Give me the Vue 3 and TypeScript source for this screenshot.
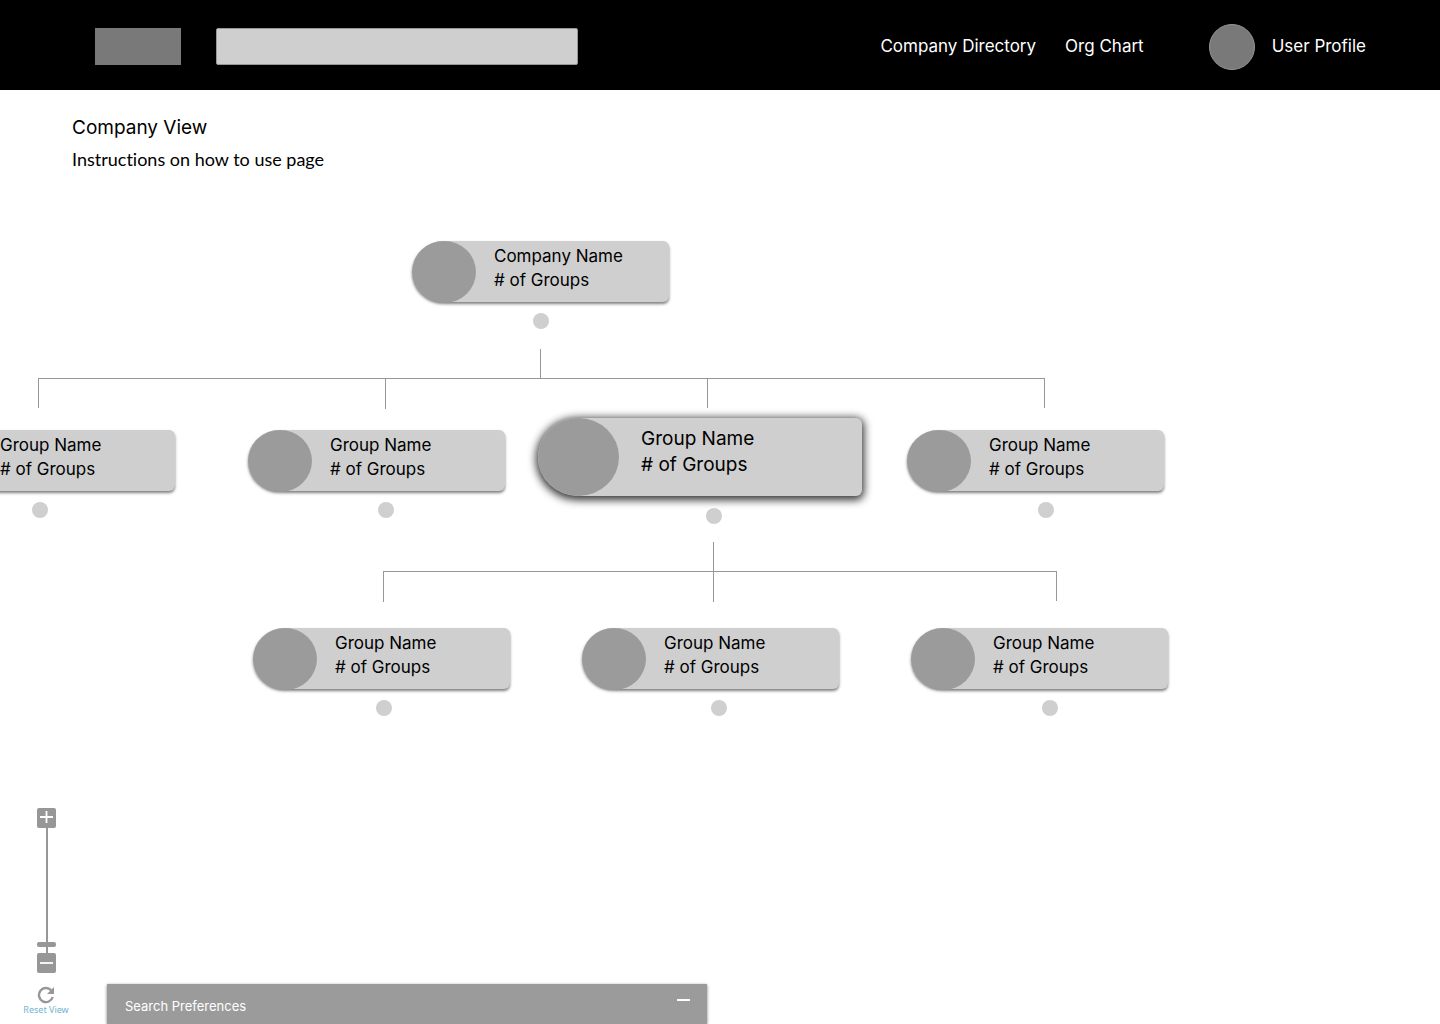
<script setup lang="ts">
import { ref } from 'vue'

interface OrgNode {
  id: number
  name: string
  x: number
  y: number
  dotX: number
  dotY: number
  selected?: boolean
}

interface Segment {
  x: number
  y: number
  w: number
  h: number
}

const nodes: OrgNode[] = [
  { id: 1, name: 'Company Name', x: 412, y: 61, dotX: 533, dotY: 133 },
  { id: 2, name: 'Group Name', x: -82, y: 250, dotX: 32, dotY: 322 },
  { id: 3, name: 'Group Name', x: 248, y: 250, dotX: 378, dotY: 322 },
  { id: 4, name: 'Group Name', x: 538, y: 238, dotX: 706, dotY: 328, selected: true },
  { id: 5, name: 'Group Name', x: 907, y: 250, dotX: 1038, dotY: 322 },
  { id: 6, name: 'Group Name', x: 253, y: 448, dotX: 376, dotY: 520 },
  { id: 7, name: 'Group Name', x: 582, y: 448, dotX: 711, dotY: 520 },
  { id: 8, name: 'Group Name', x: 911, y: 448, dotX: 1042, dotY: 520 },
]

const segments: Segment[] = [
  { x: 540, y: 169, w: 1, h: 30 },
  { x: 38, y: 198, w: 1007, h: 1 },
  { x: 38, y: 198, w: 1, h: 30 },
  { x: 385, y: 198, w: 1, h: 31 },
  { x: 707, y: 198, w: 1, h: 30 },
  { x: 1044, y: 198, w: 1, h: 30 },
  { x: 713, y: 362, w: 1, h: 60 },
  { x: 383, y: 391, w: 674, h: 1 },
  { x: 383, y: 391, w: 1, h: 31 },
  { x: 1056, y: 391, w: 1, h: 30 },
]

const query = ref('')
const zoom = ref(5)

function step(amount: number) {
  zoom.value = Math.min(100, Math.max(0, Number(zoom.value) + amount))
}
</script>

<template>
  <div class="page">
    <header class="topbar">
      <a class="logo" href="#" aria-label="Home"></a>
      <input v-model="query" class="search" type="search" aria-label="Search" />
      <nav class="nav">
        <a href="#directory">Company Directory</a>
        <a href="#chart">Org Chart</a>
      </nav>
      <a class="profile" href="#profile">
        <span class="avatar"></span>
        <span class="user">User Profile</span>
      </a>
    </header>

    <section class="intro">
      <h1>Company View</h1>
      <p>Instructions on how to use page</p>
    </section>

    <main class="canvas">
      <svg class="links" aria-hidden="true">
        <rect v-for="(s, i) in segments" :key="i" :x="s.x" :y="s.y" :width="s.w" :height="s.h" />
      </svg>

      <template v-for="n in nodes" :key="n.id">
        <article
          class="node"
          :class="{ selected: n.selected }"
          :style="{ left: n.x + 'px', top: n.y + 'px' }"
        >
          <span class="portrait"></span>
          <div class="label">
            <h2>{{ n.name }}</h2>
            <p># of Groups</p>
          </div>
        </article>
        <button
          class="dot"
          type="button"
          :aria-label="'Expand ' + n.name"
          :style="{ left: n.dotX + 'px', top: n.dotY + 'px' }"
        ></button>
      </template>

      <div class="zoom">
        <button class="square" type="button" aria-label="Zoom in" @click="step(5)">
          <svg width="19" height="20" viewBox="0 0 19 20">
            <path d="M3 9h13M9.5 3v12" stroke="#fff" stroke-width="1.8" />
          </svg>
        </button>
        <input v-model="zoom" class="slider" type="range" min="0" max="100" aria-label="Zoom level" />
        <button class="square" type="button" aria-label="Zoom out" @click="step(-5)">
          <svg width="19" height="20" viewBox="0 0 19 20">
            <path d="M3 10h13" stroke="#fff" stroke-width="1.8" />
          </svg>
        </button>
        <button class="reset" type="button" @click="zoom = 5">
          <svg width="18" height="18" viewBox="0 0 18 18">
            <path d="M14.2 4.4A7 7 0 1 0 15.7 11" fill="none" stroke="#979797" stroke-width="2.4" />
            <path d="M17 1v7h-7z" fill="#979797" />
          </svg>
          <span>Reset View</span>
        </button>
      </div>

      <section class="prefs">
        <h2>Search Preferences</h2>
        <button class="collapse" type="button" aria-label="Minimize"></button>
      </section>
    </main>
  </div>
</template>

<style>
body {
  margin: 0;
  background: #fff;
}
</style>

<style scoped>
.page {
  display: flex;
  flex-direction: column;
  min-height: 100vh;
  font-family: Inter, 'Liberation Sans', sans-serif;
  color: #000;
}

h1,
h2,
p {
  margin: 0;
  font-weight: 400;
}

a {
  color: inherit;
  text-decoration: none;
}

button {
  padding: 0;
  border: 0;
  cursor: pointer;
}

.topbar {
  display: flex;
  align-items: center;
  box-sizing: border-box;
  height: 90px;
  padding: 3px 74px 0 95px;
  background: #000;
  color: #fff;
  font-size: 17px;
  line-height: 24px;
}

.logo {
  width: 86px;
  height: 37px;
  margin-right: 35px;
  background: #797979;
}

.search {
  box-sizing: border-box;
  width: 362px;
  height: 37px;
  padding: 0 12px;
  border: 1px solid #979797;
  border-radius: 2px;
  background: #cfcfcf;
  font: inherit;
  appearance: none;
  outline: none;
}

.nav {
  display: flex;
  gap: 29px;
  margin-left: auto;
  margin-right: 65px;
}

.nav,
.user {
  padding-bottom: 2px;
}

.profile {
  display: flex;
  align-items: center;
  gap: 17px;
}

.avatar {
  box-sizing: border-box;
  width: 46px;
  height: 46px;
  border: 1px solid #979797;
  border-radius: 50%;
  background: #797979;
}

.intro {
  box-sizing: border-box;
  height: 90px;
  padding: 25px 72px 0;
}

.intro h1 {
  font-size: 19px;
  line-height: 26px;
}

.intro p {
  margin-top: 6px;
  font-family: Lato, sans-serif;
  font-size: 18px;
  font-variant-ligatures: none;
  line-height: 24px;
}

.canvas {
  position: relative;
  flex: 1;
  min-height: 640px;
  overflow: hidden;
}

.links {
  position: absolute;
  inset: 0;
  width: 100%;
  height: 100%;
  fill: #979797;
}

.node {
  position: absolute;
  display: flex;
  box-sizing: border-box;
  width: 257px;
  height: 61px;
  border-radius: 32px 6px 6px 32px / 31px 6px 6px 31px;
  background: #cfcfcf;
  box-shadow: 0 2px 3px rgba(0, 0, 0, 0.5);
  font-size: 17px;
  line-height: 24px;
}

.portrait {
  width: 64px;
  height: 62px;
  border-radius: 50%;
  background: #9b9b9b;
}

.label {
  padding: 3px 0 0 18px;
}

.label h2,
.label p {
  font-size: inherit;
}

.node.selected {
  width: 324px;
  height: 78px;
  border-radius: 40px 6px 6px 40px / 39px 6px 6px 39px;
  box-shadow: 0 2px 8px 2px rgba(0, 0, 0, 0.8);
  font-size: 19px;
  line-height: 26px;
}

.selected .portrait {
  width: 81px;
  height: 78px;
}

.selected .label {
  padding: 8px 0 0 22px;
}

.dot {
  position: absolute;
  width: 16px;
  height: 16px;
  border-radius: 50%;
  background: #cfcfcf;
}

.zoom {
  position: absolute;
  left: 16px;
  bottom: 8px;
  display: flex;
  flex-direction: column;
  align-items: center;
  width: 60px;
}

.square {
  width: 19px;
  height: 20px;
  border-radius: 2px;
  background: #979797;
}

.square svg,
.reset svg {
  display: block;
}

.slider {
  width: 19px;
  height: 125px;
  margin: 0;
  appearance: none;
  writing-mode: vertical-lr;
  direction: rtl;
  background: linear-gradient(#979797, #979797) 9px 0 / 2px 100% no-repeat;
}

.slider::-webkit-slider-thumb {
  appearance: none;
  width: 19px;
  height: 5px;
  border-radius: 2px;
  background: #979797;
}

.reset {
  display: flex;
  flex-direction: column;
  align-items: center;
  margin-top: 13px;
  background: none;
  color: #6fb6cf;
  font-family: 'Noto Sans', sans-serif;
  font-size: 9px;
  line-height: 12px;
}

.prefs {
  position: absolute;
  left: 107px;
  bottom: 0;
  display: flex;
  justify-content: space-between;
  box-sizing: border-box;
  width: 600px;
  height: 40px;
  padding: 13px 17px 0 18px;
  background: #9b9b9b;
  box-shadow: 0 1px 3px rgba(0, 0, 0, 0.5);
  color: #fff;
}

.prefs h2 {
  font-size: 13px;
  line-height: 18px;
}

.collapse {
  width: 13px;
  height: 2px;
  margin-top: 2px;
  background: #fff;
}
</style>
